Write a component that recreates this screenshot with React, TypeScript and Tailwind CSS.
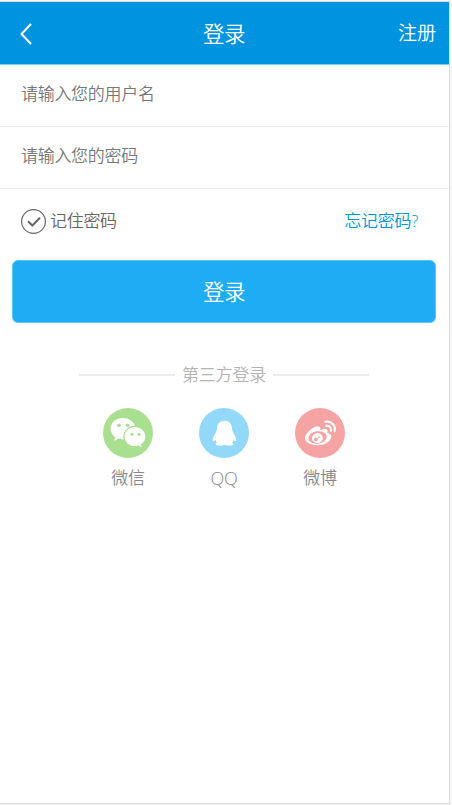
import React from 'react'

const WechatIcon = () => (
  <svg viewBox="0 0 50 50" className="h-full w-full">
    <path fill="#fff" d="M20 10C13 10 7.600 14.700 7.600 20.800C7.600 24.200 9.400 27.200 12.200 29.200L11 33L15.500 30.600C17 31.100 18.500 31.400 20 31.400C27 31.400 32.400 26.700 32.400 20.800C32.400 14.700 27 10 20 10Z" />
    <path fill="#fff" stroke="#a9e08f" strokeWidth="1.200" d="M32 18.400C25.700 18.400 20.900 22.900 20.900 28.600C20.900 34.400 25.700 38.700 32 38.700C33.200 38.700 34.400 38.500 35.500 38.200L39.500 40.400L38.500 36.800C41.200 35 43 32 43 28.600C43 22.900 38 18.400 32 18.400Z" />
    <g fill="#a9e08f">
      <circle cx="16" cy="17.300" r="1.800" />
      <circle cx="24.600" cy="17.300" r="1.800" />
      <circle cx="29" cy="26.300" r="1.500" />
      <circle cx="36" cy="26.300" r="1.500" />
    </g>
  </svg>
)

const QqIcon = () => (
  <svg viewBox="0 0 50 50" className="h-full w-full" fill="#fff">
    <path d="M25.500 12.700C20.800 12.700 18 16 18 20.500C18 22 17.400 23.200 16.800 24.500C15.500 27 13.700 29.500 13.700 31.800C13.700 33.500 14.600 33.800 16.300 31.800C16.600 33 17.200 34 18 34.800C16.500 35.400 16.200 36.800 17.500 37.200C20 37.800 23 37.400 25.500 36.900C28 37.400 31 37.800 33.500 37.200C34.800 36.800 34.500 35.400 33 34.800C33.800 34 34.400 33 34.700 31.800C36.200 33.800 37.200 33.500 37.200 31.800C37.200 29.500 35.500 27 34.200 24.500C33.600 23.200 33 22 33 20.500C33 16 30.200 12.700 25.500 12.700Z" />
  </svg>
)

const WeiboIcon = () => (
  <svg viewBox="0 0 50 50" className="h-full w-full">
    <path fill="#fff" d="M22.500 18.200C18.500 18.200 10 25 10 30.300C10 34.600 16 37.200 22.500 37.200C30.500 37.200 36.300 32.800 36.300 28.700C36.300 26.500 34.500 25.300 32.300 24.700C32.900 23 32.700 21.700 31.500 21.200C29.800 20.500 27.500 21.200 25.300 22C26 19.600 25 18.200 22.500 18.200Z" />
    <g transform="rotate(-8 22.500 29.500)">
      <ellipse cx="22.500" cy="29.500" rx="9.200" ry="6.200" fill="#f6a3a3" />
      <ellipse cx="22.300" cy="30" rx="5.500" ry="4.900" fill="#fff" />
      <circle cx="20.700" cy="31.200" r="1.900" fill="#f6a3a3" />
      <circle cx="24" cy="29.600" r="0.900" fill="#f6a3a3" />
    </g>
    <g fill="none" stroke="#fff" strokeWidth="2.100" strokeLinecap="round">
      <path d="M30.500 13.800C36.500 12.600 41.300 17.800 39.500 23.500" />
      <path d="M31.300 17.900C34.600 17.300 36.700 19.800 35.800 22.700" />
    </g>
  </svg>
)

const socials = [
  { name: '微信', color: 'bg-[#a9e08f]', text: 'text-[17px]', icon: <WechatIcon /> },
  { name: 'QQ', color: 'bg-[#92d8f9]', text: 'text-[18px]', icon: <QqIcon /> },
  { name: '微博', color: 'bg-[#f6a3a3]', text: 'text-[17px]', icon: <WeiboIcon /> },
]

const App = () => {
  return (
    <div className="h-[805px] w-[452px] bg-[#f5f5f5] pt-px font-['Open_Sans','Noto_Sans_CJK_SC',sans-serif] font-[350]">
      <main className="h-[803px] w-[450px] border-t border-r border-b border-[#dcdcdc] bg-white">
        {/* Header */}
        <header className="flex h-[63px] items-center justify-between border-b border-[#80c9ef] bg-[#0094e0] pr-[13px] pl-5 text-white">
          <svg viewBox="0 0 12 22" className="mt-0.5 h-[22px] w-3" fill="none" stroke="currentColor" strokeWidth="2">
            <path d="M11 1L1.500 11L11 21" />
          </svg>
          <h1 className="mt-0.5 ml-[18px] text-[21.500px] -tracking-[0.5px]">登录</h1>
          <a className="text-[19px]">注册</a>
        </header>

        {/* Form */}
        <div className="flex h-[62px] items-center border-b border-[#ebebeb] pb-1 pl-[21px] text-[17px] -tracking-[0.300px] text-[#777]">
          请输入您的用户名
        </div>
        <div className="flex h-[62px] items-center border-b border-[#ebebeb] pb-[3px] pl-[21px] text-[17px] -tracking-[0.300px] text-[#777]">
          请输入您的密码
        </div>
        <div className="flex h-[71px] items-center justify-between pr-[31px] pb-[7px] pl-[21px] text-[17px] -tracking-[0.300px] text-[#666]">
          <span className="flex items-center gap-1">
            <svg viewBox="0 0 25 25" className="h-[25px] w-[25px]" fill="none" stroke="#666">
              <circle cx="12.500" cy="12.500" r="11.900" strokeWidth="1.200" />
              <path d="M7 12.200L11.300 16.500L19 8.700" strokeWidth="2" />
            </svg>
            记住密码
          </span>
          <a className="text-[#0094e0]">忘记密码?</a>
        </div>
        <button className="ml-3 block h-[63px] w-[424px] rounded-md border border-[#5fc5f8] bg-[#1eacf5] pt-0.5 text-[21.500px] -tracking-[0.500px] text-white">
          登录
        </button>

        {/* Third party login */}
        <div className="mt-10 flex h-6 items-center justify-center gap-[7px] pr-px text-[17px] -tracking-[0.200px] text-[#b4b4b4]">
          <span className="h-0.5 w-24 bg-[#ebebeb]" />
          第三方登录
          <span className="h-0.5 w-24 bg-[#ebebeb]" />
        </div>
        <div className="mt-[21px] flex justify-center gap-[46px] pr-px">
          {socials.map((item) => (
            <a key={item.name} className={`flex w-[50px] flex-col items-center -tracking-[0.300px] text-[#88888c] ${item.text}`}>
              <span className={`h-[50px] w-[50px] rounded-full ${item.color}`}>
                {item.icon}
              </span>
              <span className="mt-2 leading-6">{item.name}</span>
            </a>
          ))}
        </div>
      </main>
    </div>
  )
}

export default App
